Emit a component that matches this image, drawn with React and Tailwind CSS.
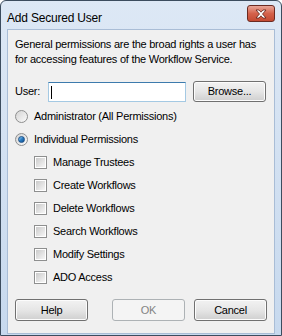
import { useState } from "react";

const font = { fontFamily: '"Liberation Sans", Arial, sans-serif' };

function Radio({ checked, label }) {
  return (
    <div className="flex h-[23px] items-center">
      <span className="flex h-[13px] w-[13px] items-center justify-center rounded-full border border-[#8e8f8f] bg-gradient-to-br from-[#d4d4d4] to-[#fbfbfb]">
        {checked && (
          <span className="h-[7px] w-[7px] rounded-full border border-[#1c4f86] bg-gradient-to-br from-[#8fd2f8] via-[#2a7cc2] to-[#0d4e91]" />
        )}
      </span>
      <span className="ml-[6px]">{label}</span>
    </div>
  );
}

function Check({ label }) {
  return (
    <div className="flex h-[23px] items-center pl-[19px]">
      <span className="flex h-[13px] w-[13px] items-center justify-center border border-[#8e8f8f] bg-white">
        <span className="h-[9px] w-[9px] bg-gradient-to-br from-[#cbcbcb] to-[#f6f6f6]" />
      </span>
      <span className="ml-[6px]">{label}</span>
    </div>
  );
}

function Button({ children, disabled, tall = "h-[22px]" }) {
  return (
    <button
      type="button"
      disabled={disabled}
      className={
        disabled
          ? `${tall} w-[73px] rounded-[3px] border border-[#adb2b5] bg-[#f4f4f4] text-[#838383]`
          : `${tall} w-[73px] rounded-[3px] border border-[#707070] bg-gradient-to-b from-[#f2f2f2] via-[#e6e6e6] to-[#cfcfcf] text-black shadow-[inset_0_0_0_1px_#fcfcfc]`
      }
    >
      {children}
    </button>
  );
}

export default function App() {
  const [user, setUser] = useState("");

  return (
    <div
      className="flex h-[336px] w-[282px] flex-col overflow-hidden rounded-t-[6px] border border-[#3c4c5e] bg-gradient-to-b from-[#dde8f5] to-[#c7d9ee] text-[11px] tracking-[-0.25px] text-black"
      style={font}
    >
      {/* title bar */}
      <div className="flex h-[28px] shrink-0 items-start justify-between pl-[6px] pr-[6px]">
        <span className="mt-[8px] text-[12px] tracking-[-0.2px] text-black">Add Secured User</span>
        <span className="mt-[4px] flex h-[17px] w-[28px] items-center justify-center rounded-[3px] border border-[#6b2a21] bg-gradient-to-b from-[#e8a597] via-[#d4624b] to-[#c44a32]">
          <svg width="12" height="10" viewBox="0 0 12 10">
            <path
              d="M1 1h3l2 2.2L8 1h3L7.5 5 11 9H8L6 6.8 4 9H1l3.5-4z"
              fill="#fff"
              stroke="#5a2018"
              strokeWidth="0.8"
            />
          </svg>
        </span>
      </div>

      {/* client */}
      <div className="mx-[6px] mb-[1px] flex flex-1 flex-col border border-[#a9bdd6] bg-[#f0f0f0] px-[7px]">
        <p className="mt-[7px] leading-[15px]">
          General permissions are the broad rights a user has for accessing
          features of the Workflow Service.
        </p>

        <div className="mt-[14px] flex items-center">
          <span>User:</span>
          <div className="relative ml-[8px]">
            <input
              value={user}
              onChange={(e) => setUser(e.target.value)}
              className="h-[20px] w-[138px] border border-[#a4c9e3] border-t-[#3d7bad] bg-white px-[2px] outline-none"
            />
            {user === "" && (
              <span className="pointer-events-none absolute left-[3px] top-[4px] h-[13px] w-px bg-black" />
            )}
          </div>
          <span className="ml-[7px]">
            <Button tall="h-[21px]">Browse...</Button>
          </span>
        </div>

        <div className="mt-[3px]">
          <Radio label="Administrator (All Permissions)" />
          <Radio checked label="Individual Permissions" />
          <Check label="Manage Trustees" />
          <Check label="Create Workflows" />
          <Check label="Delete Workflows" />
          <Check label="Search Workflows" />
          <Check label="Modify Settings" />
          <Check label="ADO Access" />
        </div>

        <div className="mt-[10px] flex items-center">
          <Button>Help</Button>
          <span className="ml-[24px]">
            <Button disabled>OK</Button>
          </span>
          <span className="ml-[9px]">
            <Button>Cancel</Button>
          </span>
        </div>
      </div>
    </div>
  );
}
